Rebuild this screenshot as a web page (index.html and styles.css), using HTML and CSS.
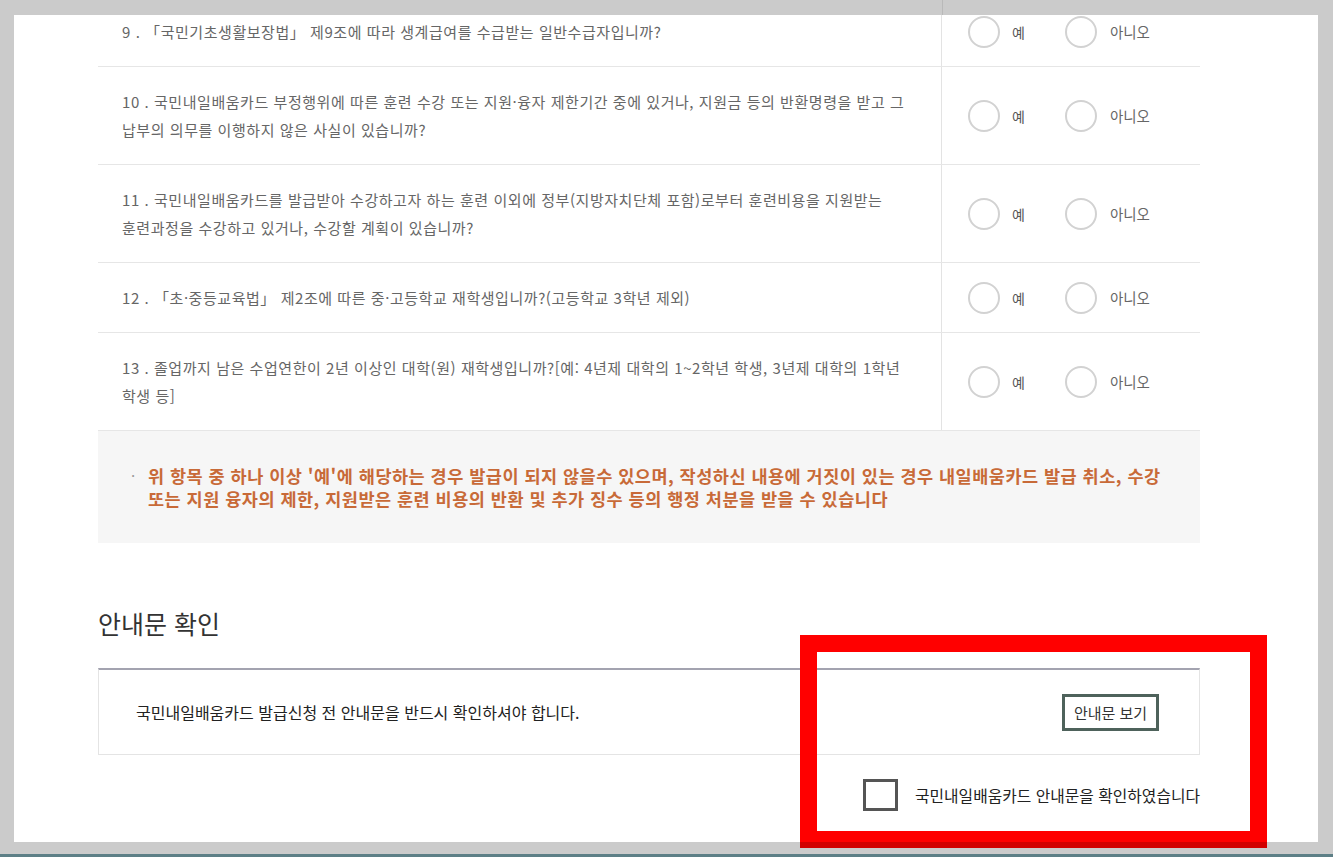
FILE: index.html
```html
<!DOCTYPE html>
<html lang="ko">

<head>
    <meta charset="UTF-8">
    <meta name="viewport" content="width=device-width, initial-scale=1.0">
    <title>국민내일배움카드 발급신청</title>
    <link rel="stylesheet" href="styles.css">
</head>

<body>
    <div class="screen">
        <div class="frame-top"></div>

        <div class="panel">
            <!-- 자격 확인 문항 -->
            <div class="qtable">
                <div class="qrow">
                    <div class="q">9 . 「국민기초생활보장법」 제9조에 따라 생계급여를 수급받는 일반수급자입니까?</div>
                    <div class="a">
                        <span class="radio"></span><span class="yes">예</span>
                        <span class="radio"></span><span class="no">아니오</span>
                    </div>
                </div>
                <div class="qrow">
                    <div class="q">10 . 국민내일배움카드 부정행위에 따른 훈련 수강 또는 지원·융자 제한기간 중에 있거나, 지원금 등의 반환명령을 받고 그<br>납부의 의무를 이행하지 않은 사실이 있습니까?</div>
                    <div class="a">
                        <span class="radio"></span><span class="yes">예</span>
                        <span class="radio"></span><span class="no">아니오</span>
                    </div>
                </div>
                <div class="qrow">
                    <div class="q">11 . 국민내일배움카드를 발급받아 수강하고자 하는 훈련 이외에 정부(지방자치단체 포함)로부터 훈련비용을 지원받는<br>훈련과정을 수강하고 있거나, 수강할 계획이 있습니까?</div>
                    <div class="a">
                        <span class="radio"></span><span class="yes">예</span>
                        <span class="radio"></span><span class="no">아니오</span>
                    </div>
                </div>
                <div class="qrow">
                    <div class="q">12 . 「초·중등교육법」 제2조에 따른 중·고등학교 재학생입니까?(고등학교 3학년 제외)</div>
                    <div class="a">
                        <span class="radio"></span><span class="yes">예</span>
                        <span class="radio"></span><span class="no">아니오</span>
                    </div>
                </div>
                <div class="qrow">
                    <div class="q">13 . 졸업까지 남은 수업연한이 2년 이상인 대학(원) 재학생입니까?[예: 4년제 대학의 1~2학년 학생, 3년제 대학의 1학년<br>학생 등]</div>
                    <div class="a">
                        <span class="radio"></span><span class="yes">예</span>
                        <span class="radio"></span><span class="no">아니오</span>
                    </div>
                </div>
            </div>

            <div class="notice">
                <span class="dot">·</span>
                <p>위 항목 중 하나 이상 '예'에 해당하는 경우 발급이 되지 않을수 있으며, 작성하신 내용에 거짓이 있는 경우 내일배움카드 발급 취소, 수강<br>또는 지원 융자의 제한, 지원받은 훈련 비용의 반환 및 추가 징수 등의 행정 처분을 받을 수 있습니다</p>
            </div>

            <h2 class="title">안내문 확인</h2>

            <div class="guide">
                <p>국민내일배움카드 발급신청 전 안내문을 반드시 확인하셔야 합니다.</p>
                <a href="#" class="btn">안내문 보기</a>
            </div>

            <label class="agree">
                <span class="check"></span>
                <span>국민내일배움카드 안내문을 확인하였습니다</span>
            </label>
        </div>

        <div class="frame-bottom"></div>
        <div class="taskbar"></div>

        <div class="mark"></div>
    </div>
</body>

</html>
```

FILE: styles.css
```css
html,
body {
    margin: 0;
    padding: 0;
    background: #cbcbcb;
}

body {
    font-family: "Noto Sans CJK KR", "Noto Sans", sans-serif;
    color: #333;
}

.screen {
    position: relative;
    width: 1333px;
    height: 857px;
    overflow: hidden;
}

.frame-top {
    height: 15px;
    background: linear-gradient(to right, transparent 942px, #b9b9b9 942px, #b9b9b9 943px, transparent 943px);
}

.panel {
    margin-left: 14px;
    width: 1304px;
    height: 827px;
    padding-left: 84px;
    box-sizing: border-box;
    background: #fff;
    overflow: hidden;
}

.frame-bottom {
    height: 12px;
}

.taskbar {
    height: 3px;
    background: #5d7f86;
}

/* 문항 */
.qtable {
    width: 1102px;
    margin-top: -18px;
}

.qrow {
    display: flex;
    border-bottom: 1px solid #e6e6e6;
}

.q {
    width: 844px;
    box-sizing: border-box;
    padding: 21px 24px 20px;
    border-right: 1px solid #e3e3e3;
    font-size: 15px;
    line-height: 28px;
    color: #666;
    letter-spacing: 0.55px;
}

.a {
    flex: 1;
    display: flex;
    align-items: center;
    padding-left: 26px;
    font-size: 14px;
    color: #555;
}

.radio {
    width: 32px;
    height: 32px;
    box-sizing: border-box;
    border: 2px solid #d2d2d2;
    border-radius: 50%;
}

.yes {
    margin: 0 40px 0 12px;
}

.no {
    margin-left: 13px;
    color: #666;
    font-size: 14.5px;
}

/* 유의사항 */
.notice {
    display: flex;
    width: 1102px;
    box-sizing: border-box;
    padding: 33px 20px 33px 33px;
    background: #f6f6f6;
}

.notice .dot {
    width: 17px;
    color: #999;
    font-size: 15px;
    line-height: 23px;
}

.notice p {
    margin: 0;
    font-size: 17.5px;
    line-height: 23px;
    letter-spacing: 0.5px;
    font-weight: 700;
    color: #c86a38;
}

.title {
    margin: 63px 0 28px;
    font-size: 25px;
    line-height: 34px;
    font-weight: 400;
    color: #333;
}

.guide {
    display: flex;
    align-items: center;
    justify-content: space-between;
    width: 1102px;
    height: 87px;
    box-sizing: border-box;
    padding: 0 40px 0 37px;
    border: 1px solid #e4e4e4;
    border-top: 2px solid #a3a3b0;
}

.guide p {
    margin: 0;
    font-size: 16px;
    color: #222;
}

.btn {
    display: block;
    width: 97px;
    height: 37px;
    box-sizing: border-box;
    border: 3px solid #4e625b;
    font-size: 15px;
    line-height: 31px;
    text-align: center;
    color: #333;
    text-decoration: none;
}

.agree {
    display: flex;
    align-items: center;
    justify-content: flex-end;
    width: 1102px;
    margin-top: 24px;
    font-size: 15.8px;
    color: #222;
}

.check {
    width: 35px;
    height: 32px;
    box-sizing: border-box;
    border: 3px solid #555;
    margin-right: 17px;
}

/* 강조 표시 */
.mark {
    position: absolute;
    left: 800px;
    top: 635px;
    width: 467px;
    height: 213px;
    box-sizing: border-box;
    border: 17px solid #ff0000;
}

.mark::after {
    content: "";
    position: absolute;
    left: -17px;
    right: -17px;
    bottom: -17px;
    height: 6px;
    background: #d20000;
}
```
